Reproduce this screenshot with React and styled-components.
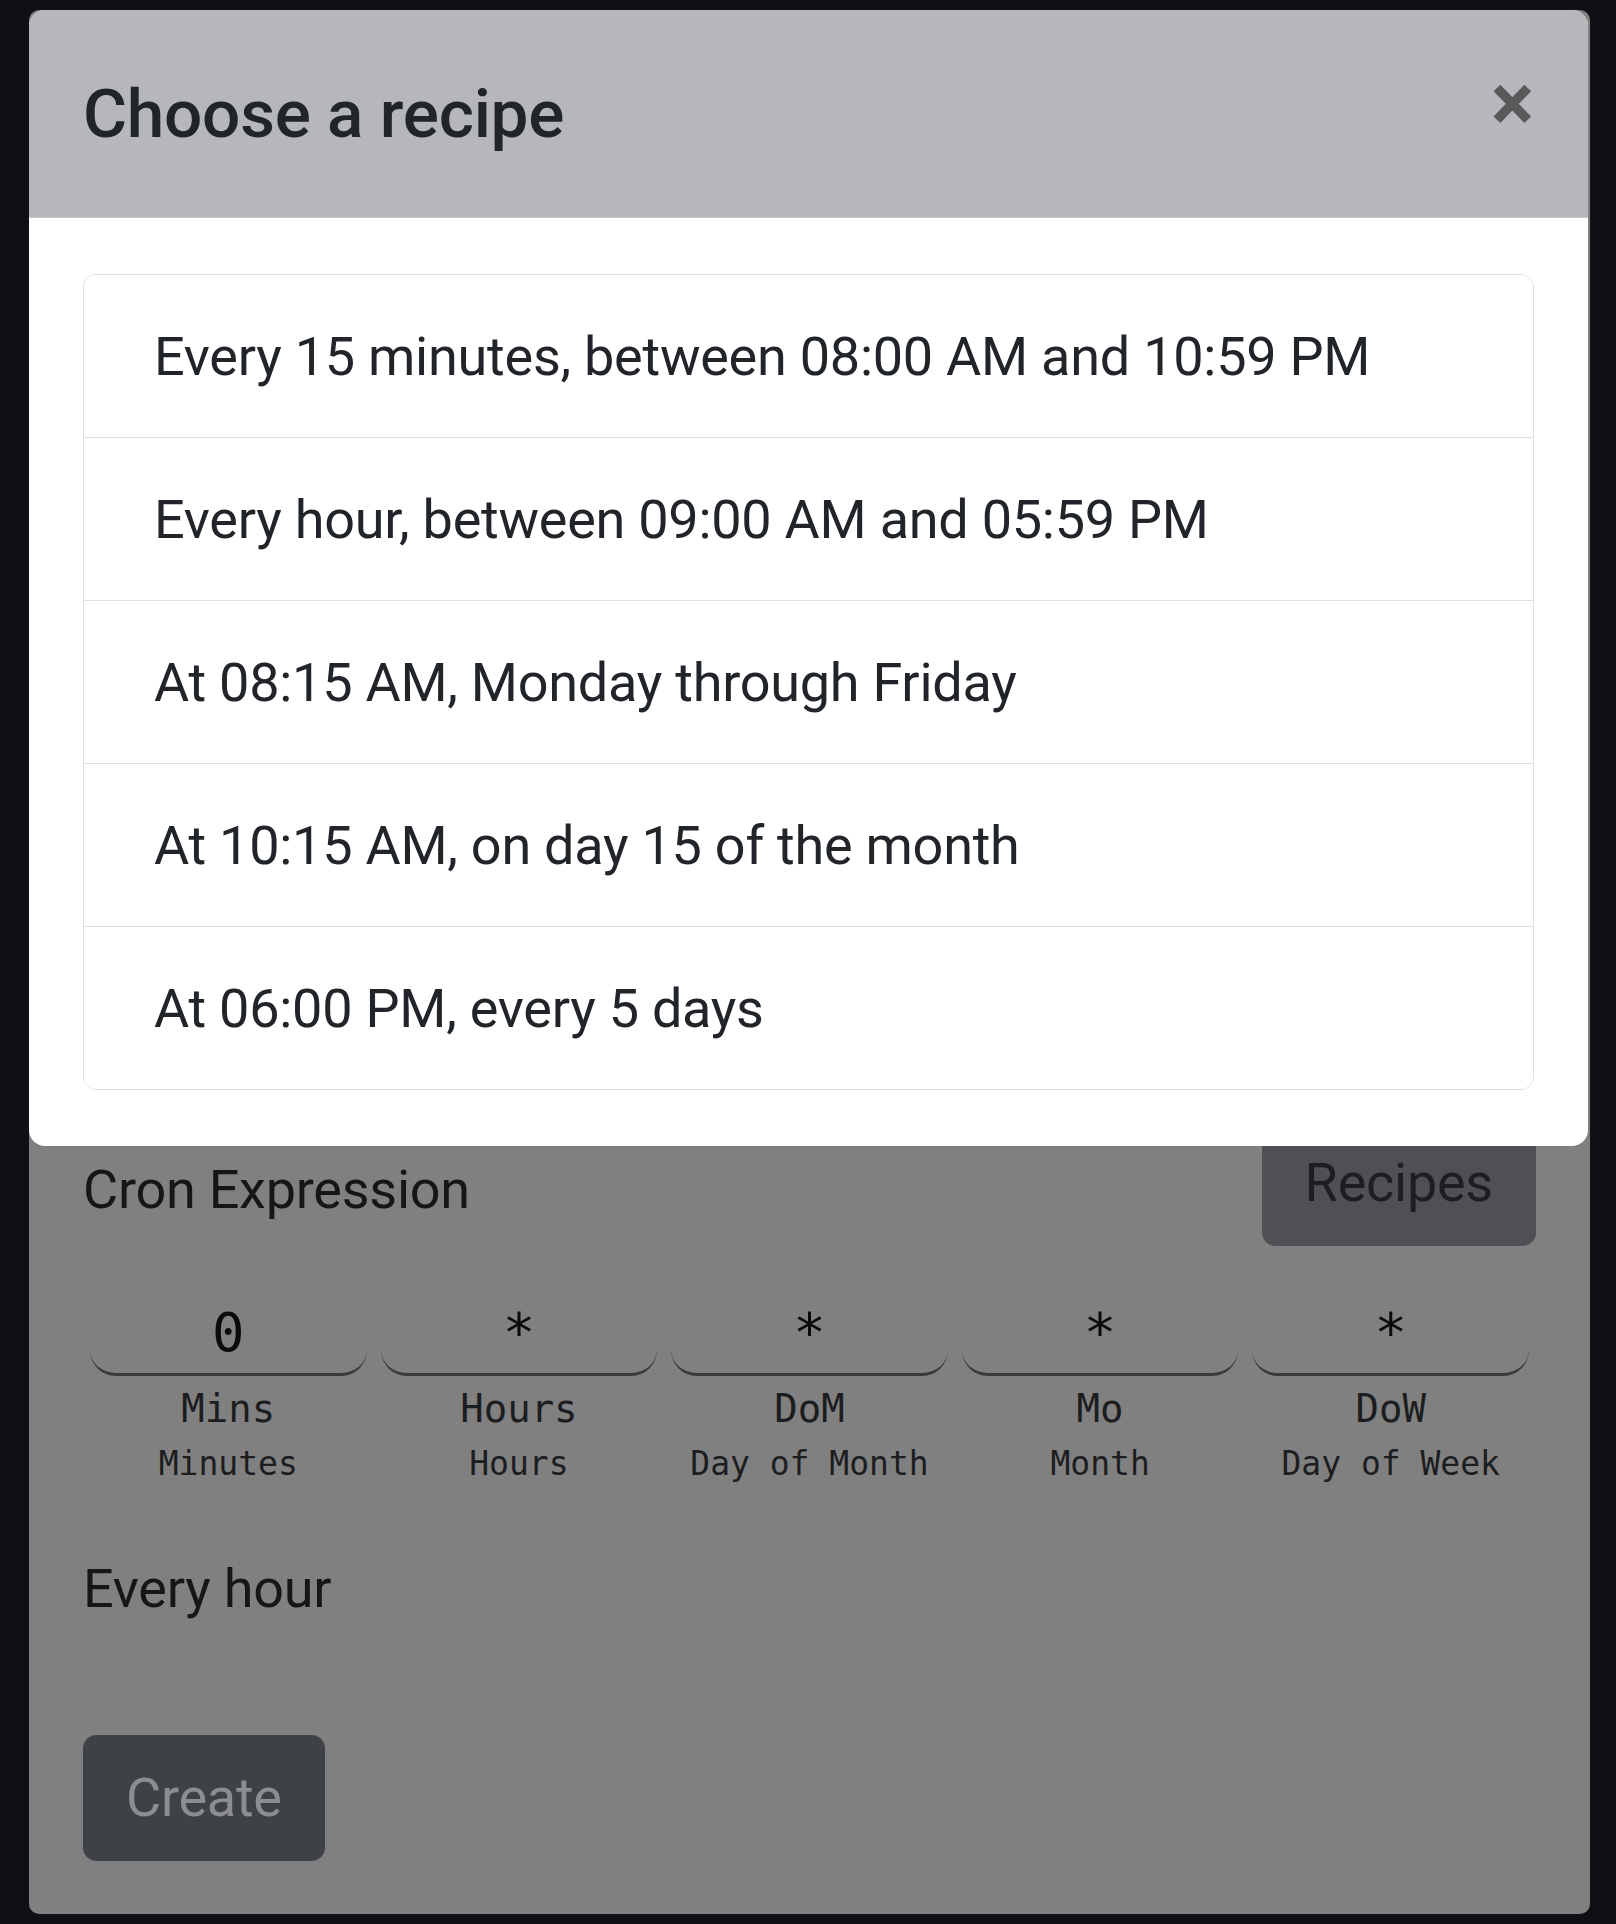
import styled, { createGlobalStyle } from "styled-components";

const GlobalStyle = createGlobalStyle`
  * { box-sizing: border-box; }
  html, body {
    margin: 0;
    padding: 0;
    background: #0e1013;
  }
  body {
    font-family: Roboto, "Noto Sans", sans-serif;
    color: #212529;
    letter-spacing: -0.25px;
  }
`;

const Screen = styled.div`
  position: relative;
  height: 1924px;
  padding: 10px 26px 10px 29px;
`;

/* the page behind the dialog, already dimmed by the backdrop */
const Page = styled.div`
  height: 1904px;
  background: #808080;
  border-radius: 10px;
  padding: 0 54px 53px;
  display: flex;
  flex-direction: column;
  justify-content: flex-end;
  color: #151618;
`;

const TopRow = styled.div`
  display: flex;
  justify-content: space-between;
  align-items: center;
`;

const SectionTitle = styled.div`
  font-size: 54px;
  line-height: 81px;
  padding-top: 12px;
`;

const Button = styled.button`
  font-family: Roboto, "Noto Sans", sans-serif;
  letter-spacing: -0.25px;
  font-size: 54px;
  line-height: 81px;
  padding: 21px 42px 22px;
  border: 1px solid ${(p) => p.$bg};
  border-radius: 13px;
  background: ${(p) => p.$bg};
  color: ${(p) => p.$fg};
  cursor: pointer;
`;

const Fields = styled.div`
  display: grid;
  grid-template-columns: repeat(5, 1fr);
  margin-top: 46px;
`;

const Field = styled.div`
  padding: 0 7px;
  text-align: center;
  letter-spacing: 0;
  font-family: "DejaVu Sans Mono", "Liberation Mono", monospace;
`;

const Value = styled.div`
  font-size: 54px;
  line-height: 81px;
  color: #0b0b0c;
  border-bottom: 3px solid #38393b;
  border-radius: 0 0 26px 26px;
`;

const Abbr = styled.div`
  margin-top: 4px;
  font-size: 39px;
  line-height: 58px;
  color: #1c1d1f;
`;

const FullName = styled.div`
  margin-top: 1px;
  font-size: 33px;
  line-height: 50px;
  color: #1c1d1f;
`;

const Summary = styled.div`
  margin-top: 59px;
  font-size: 54px;
  line-height: 81px;
`;

const CreateRow = styled.div`
  margin-top: 106px;
  display: flex;
`;

/* dialog */
const Modal = styled.div`
  position: absolute;
  top: 10px;
  left: 29px;
  width: 1559px;
  background: #fff;
  border-radius: 16px;
  overflow: hidden;
`;

const ModalHeader = styled.div`
  display: flex;
  align-items: flex-start;
  justify-content: space-between;
  padding: 53px 54px;
  background: #b6b7bb;
  border-bottom: 1px solid #c9cacd;
`;

const ModalTitle = styled.h5`
  margin: 0;
  font-size: 67.5px;
  line-height: 101px;
  font-weight: 500;
  color: #212529;
`;

const Close = styled.button`
  margin: -54px -54px -54px auto;
  padding: 54px;
  border: 0;
  background: transparent;
  font-family: Roboto, sans-serif;
  font-size: 81px;
  font-weight: 700;
  line-height: 1;
  color: #58595b;
  cursor: pointer;
`;

const ModalBody = styled.div`
  padding: 56px 54px;
`;

const List = styled.div`
  border: 1px solid #dfdfe0;
  border-radius: 13px;
  overflow: hidden;
`;

const Item = styled.button`
  display: block;
  width: 100%;
  text-align: left;
  background: #fff;
  border: 0;
  border-top: ${(p) => (p.$first ? "0" : "1px solid #dfdfe0")};
  padding: 40.5px 70px;
  font-family: Roboto, "Noto Sans", sans-serif;
  letter-spacing: -0.25px;
  font-size: 54px;
  line-height: 81px;
  color: #212529;
  cursor: pointer;
`;

const recipes = [
  "Every 15 minutes, between 08:00 AM and 10:59 PM",
  "Every hour, between 09:00 AM and 05:59 PM",
  "At 08:15 AM, Monday through Friday",
  "At 10:15 AM, on day 15 of the month",
  "At 06:00 PM, every 5 days",
];

const fields = [
  { value: "0", abbr: "Mins", name: "Minutes" },
  { value: "*", abbr: "Hours", name: "Hours" },
  { value: "*", abbr: "DoM", name: "Day of Month" },
  { value: "*", abbr: "Mo", name: "Month" },
  { value: "*", abbr: "DoW", name: "Day of Week" },
];

export default function App() {
  return (
    <Screen>
      <GlobalStyle />
      <Page>
        <TopRow>
          <SectionTitle>Cron Expression</SectionTitle>
          <Button $bg="#4f5054" $fg="#1d1e21">
            Recipes
          </Button>
        </TopRow>
        <Fields>
          {fields.map((f) => (
            <Field key={f.abbr}>
              <Value>{f.value}</Value>
              <Abbr>{f.abbr}</Abbr>
              <FullName>{f.name}</FullName>
            </Field>
          ))}
        </Fields>
        <Summary>Every hour</Summary>
        <CreateRow>
          <Button $bg="#3e4246" $fg="#8b8d90">
            Create
          </Button>
        </CreateRow>
      </Page>

      <Modal>
        <ModalHeader>
          <ModalTitle>Choose a recipe</ModalTitle>
          <Close aria-label="Close">×</Close>
        </ModalHeader>
        <ModalBody>
          <List>
            {recipes.map((r, i) => (
              <Item key={r} $first={i === 0}>
                {r}
              </Item>
            ))}
          </List>
        </ModalBody>
      </Modal>
    </Screen>
  );
}
